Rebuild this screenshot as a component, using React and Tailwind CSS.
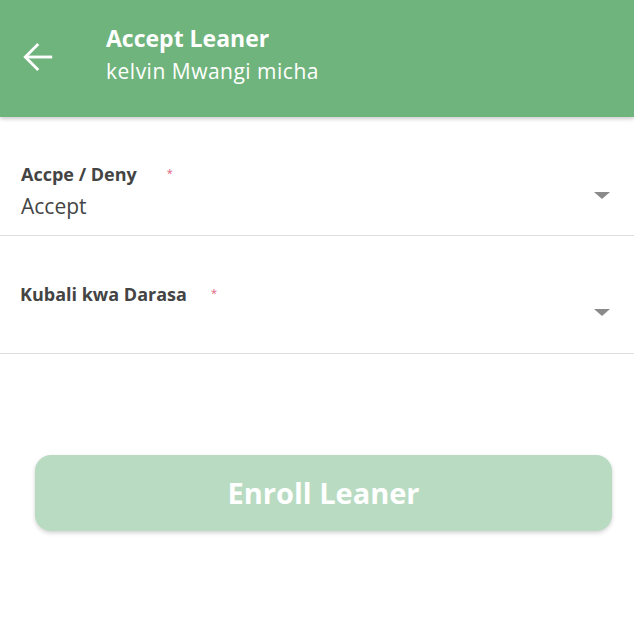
export default function App() {
  return (
    <div className="w-[634px] h-[620px] bg-white relative overflow-hidden" style={{ fontFamily: "'Open Sans', 'Noto Sans', sans-serif" }}>
      <div className="h-[117px] bg-[#70b47d] flex items-center shadow-[0_2px_4px_rgba(0,0,0,0.2)] relative z-10">
        <div className="w-[106px] flex justify-start pl-[20px] -mt-[4px]">
          <svg width="36" height="36" viewBox="0 0 24 24" fill="none" stroke="white" strokeWidth="1.9" strokeLinecap="square">
            <path d="M20.5 12H4.5" />
            <path d="M11.5 4l-8 8 8 8" />
          </svg>
        </div>
        <div className="flex flex-col text-white -mt-[4px]">
          <div className="text-[23px] font-bold leading-[28px] -mt-[2px]">Accept Leaner</div>
          <div className="text-[21px] leading-[32px] tracking-[0.5px] mt-[3px]">kelvin Mwangi micha</div>
        </div>
      </div>

      <div className="h-[119px] border-b border-[#dedede] relative">
        <div className="pl-[21px] pt-[45px]">
          <div className="flex items-start">
            <span className="text-[18px] font-bold text-[#444] leading-[24px]">Accpe / Deny</span>
            <span className="ml-[30px] text-[#e0607e] text-[11px] leading-[14px] mt-[4px]">*</span>
          </div>
          <div className="text-[21px] text-[#444] leading-[28px] mt-[6px]">Accept</div>
        </div>
        <div className="absolute right-[24px] top-[75px] w-0 h-0 border-l-[8px] border-r-[8px] border-t-[7px] border-l-transparent border-r-transparent border-t-[#8a8a8a]"></div>
      </div>
      <div className="h-[118px] border-b border-[#dedede] relative">
        <div className="pl-[20px] pt-[46px] flex items-start">
          <span className="text-[18px] font-bold text-[#444] leading-[24px]">Kubali kwa Darasa</span>
          <span className="ml-[24px] text-[#e0607e] text-[11px] leading-[14px] mt-[4px]">*</span>
        </div>
        <div className="absolute right-[24px] top-[73px] w-0 h-0 border-l-[8px] border-r-[8px] border-t-[7px] border-l-transparent border-r-transparent border-t-[#8a8a8a]"></div>
      </div>

      <div className="pl-[35px] pr-[22px] mt-[101px]">
        <div className="h-[76px] rounded-[16px] bg-[#b8dbc2] flex items-center justify-center shadow-[0_2px_4px_rgba(0,0,0,0.18)]">
          <span className="text-white text-[29px] font-bold">Enroll Leaner</span>
        </div>
      </div>
    </div>
  );
}
